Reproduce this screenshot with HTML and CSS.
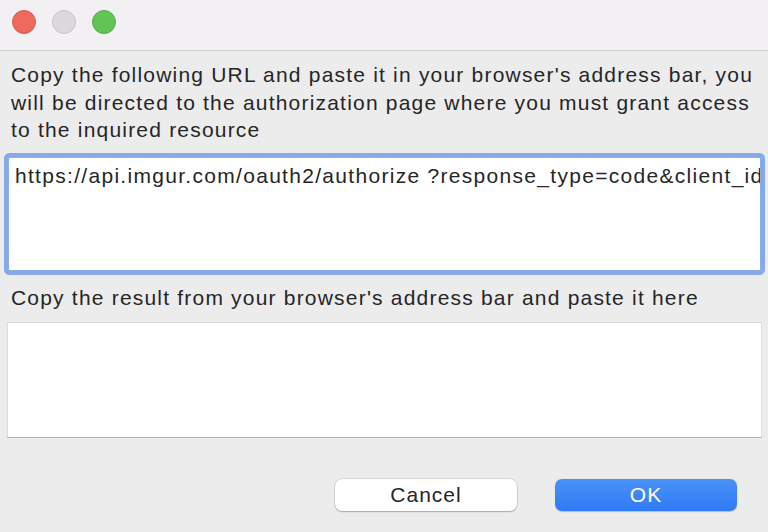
FILE: index.html
```html
<!DOCTYPE html>
<html>
<head>
<meta charset="utf-8">
<link rel="stylesheet" href="styles.css">
</head>
<body>
<div class="window">
  <div class="titlebar">
    <span class="light red"></span>
    <span class="light gray"></span>
    <span class="light green"></span>
  </div>
  <div class="content">
    <p class="label first">Copy the following URL and paste it in your browser's address bar, you will be directed to the authorization page where you must grant access to the inquired resource</p>
    <div class="field focused">
      <div class="field-text">https://api.imgur.com/oauth2/authorize ?response_type=code&amp;client_id</div>
    </div>
    <p class="label second">Copy the result from your browser's address bar and paste it here</p>
    <div class="field plain"></div>
    <div class="buttons">
      <button class="btn cancel">Cancel</button>
      <button class="btn ok">OK</button>
    </div>
  </div>
</div>
</body>
</html>
```
FILE: styles.css
```css
* { box-sizing: border-box; }
html, body {
  margin: 0;
  padding: 0;
  width: 768px;
  height: 532px;
  overflow: hidden;
  background: #ececec;
  font-family: "Liberation Sans", Arial, sans-serif;
  color: #262626;
}
.window { width: 768px; height: 532px; display: flex; flex-direction: column; }
.titlebar {
  height: 51px;
  flex: none;
  background: #f3f0f3;
  border-bottom: 1px solid #cfcccf;
  display: flex;
  align-items: center;
  padding-left: 12px;
  gap: 16px;
  padding-bottom: 7px;
}
.light {
  width: 24px;
  height: 24px;
  border-radius: 50%;
  display: block;
}
.red { background: #ee6a5e; border: 1px solid #d95a4f; }
.gray { background: #dcd8dc; border: 1px solid #c7c3c7; }
.green { background: #61c454; border: 1px solid #52ad44; }
.content { flex: 1; display: flex; flex-direction: column; }
.label {
  margin: 0;
  font-size: 21px;
  line-height: 27.5px;
  letter-spacing: 1.2px;
  padding-left: 11px;
  padding-right: 2px;
}
.label.first { margin-top: 10px; }
.field {
  background: #fff;
  margin-left: 8px;
  margin-right: 7px;
  flex: none;
}
.focused {
  margin-top: 13px;
  height: 114px;
  border: 1px solid #8aaee8;
  box-shadow: 0 0 0 4px #87a9ea;
  border-radius: 2px;
  overflow: hidden;
}
.field-text {
  white-space: nowrap;
  font-size: 21px;
  line-height: 24px;
  letter-spacing: 1.3px;
  padding: 6px 0 0 6px;
}
.label.second { margin-top: 13px; }
.plain {
  margin-top: 11px;
  margin-left: 7px;
  margin-right: 6px;
  height: 116px;
  border-top: 1px solid #d4d4d4;
  border-left: 1px solid #dcdcdc;
  border-right: 1px solid #dcdcdc;
  border-bottom: 1px solid #b0b0b0;
}
.buttons {
  display: flex;
  justify-content: flex-end;
  gap: 38px;
  padding-right: 31px;
  margin-top: 41px;
}
.btn {
  width: 182px;
  height: 32px;
  border-radius: 7px;
  font-family: "Liberation Sans", Arial, sans-serif;
  font-size: 21px;
  letter-spacing: 1px;
  border: none;
  padding: 0;
}
.cancel {
  background: #fff;
  color: #262626;
  box-shadow: 0 0 0 0.5px rgba(0,0,0,0.18), 0 1px 1.5px rgba(0,0,0,0.22);
}
.ok {
  background: linear-gradient(#4a92f8, #2f7af5);
  color: #fff;
  box-shadow: 0 0.5px 1px rgba(0,0,0,0.2);
}
```
